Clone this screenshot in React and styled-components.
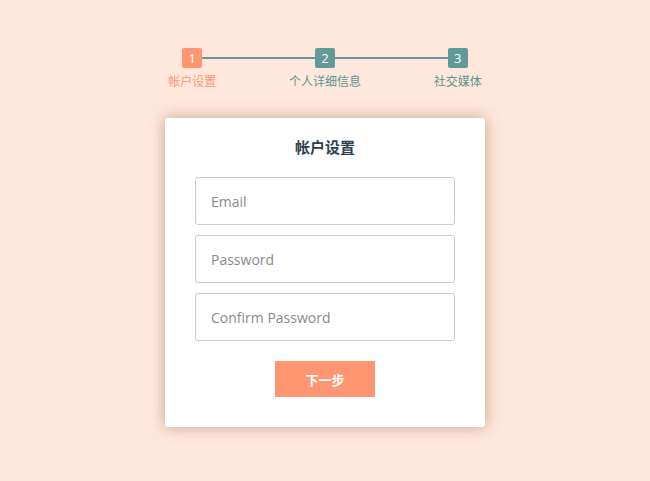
import styled, { createGlobalStyle } from "styled-components";

const GlobalStyle = createGlobalStyle`
  html, body {
    margin: 0;
    padding: 0;
    background-color: #ffe8db;
  }
  body {
    font-family: "Open Sans", "Noto Sans CJK SC", sans-serif;
  }
  * {
    box-sizing: border-box;
  }
`;

const PageContainer = styled.div`
  min-height: 100vh;
  display: flex;
  flex-direction: column;
  align-items: center;
  padding-top: 48px;
`;

const Progress = styled.ul`
  position: relative;
  list-style: none;
  margin: 0;
  padding: 0;
  width: 398px;
  display: flex;

  &::before {
    content: "";
    position: absolute;
    left: 66px;
    right: 66px;
    top: 9px;
    height: 2px;
    background-color: #629a99;
  }
`;

const Step = styled.li`
  position: relative;
  flex: 1;
  display: flex;
  flex-direction: column;
  align-items: center;
`;

const StepNumber = styled.span`
  width: 20px;
  height: 20px;
  border-radius: 2px;
  background-color: ${(p) => (p.$active ? "#ff9671" : "#629a99")};
  color: #ffffff;
  font-family: "Open Sans", sans-serif;
  font-size: 13px;
  font-weight: 500;
  line-height: 20px;
  text-align: center;
`;

const StepLabel = styled.span`
  margin-top: 4px;
  font-family: "Noto Sans CJK SC", sans-serif;
  font-size: 12px;
  font-weight: 400;
  line-height: 17px;
  color: ${(p) => (p.$active ? "#ff9671" : "#5a9593")};
`;

const Card = styled.form`
  margin-top: 29px;
  width: 320px;
  padding: 19px 30px 30px;
  background-color: #ffffff;
  border-radius: 3px;
  box-shadow: 0 0 15px 1px rgba(120, 80, 50, 0.4);
  display: flex;
  flex-direction: column;
  align-items: center;
`;

const Title = styled.h2`
  margin: 0 0 20px;
  font-family: "Noto Sans CJK SC", sans-serif;
  font-size: 15px;
  font-weight: 700;
  line-height: 20px;
  color: #2c3e50;
`;

const Fields = styled.div`
  width: 100%;
  display: flex;
  flex-direction: column;
  gap: 10px;
`;

const Input = styled.input`
  width: 100%;
  height: 48px;
  padding: 0 15px;
  border: 1px solid #cccccc;
  border-radius: 3px;
  font-family: "Open Sans", sans-serif;
  font-size: 14px;
  color: #2c3e50;
  outline: none;

  &::placeholder {
    color: #8a8a8a;
  }
`;

const NextButton = styled.button`
  margin-top: 20px;
  width: 100px;
  height: 36px;
  border: none;
  border-radius: 0;
  background-color: #ff9671;
  color: #ffffff;
  font-family: "Noto Sans CJK SC", sans-serif;
  font-size: 13px;
  font-weight: 700;
  cursor: pointer;
`;

const steps = [
  { n: 1, label: "帐户设置", active: true },
  { n: 2, label: "个人详细信息" },
  { n: 3, label: "社交媒体" },
];

const App = () => {
  return (
    <>
      <GlobalStyle />
      <PageContainer>
        <Progress>
          {steps.map((s) => (
            <Step key={s.n}>
              <StepNumber $active={s.active}>{s.n}</StepNumber>
              <StepLabel $active={s.active}>{s.label}</StepLabel>
            </Step>
          ))}
        </Progress>
        <Card onSubmit={(e) => e.preventDefault()}>
          <Title>帐户设置</Title>
          <Fields>
            <Input type="text" placeholder="Email" />
            <Input type="password" placeholder="Password" />
            <Input type="password" placeholder="Confirm Password" />
          </Fields>
          <NextButton type="button">下一步</NextButton>
        </Card>
      </PageContainer>
    </>
  );
};

export default App;
